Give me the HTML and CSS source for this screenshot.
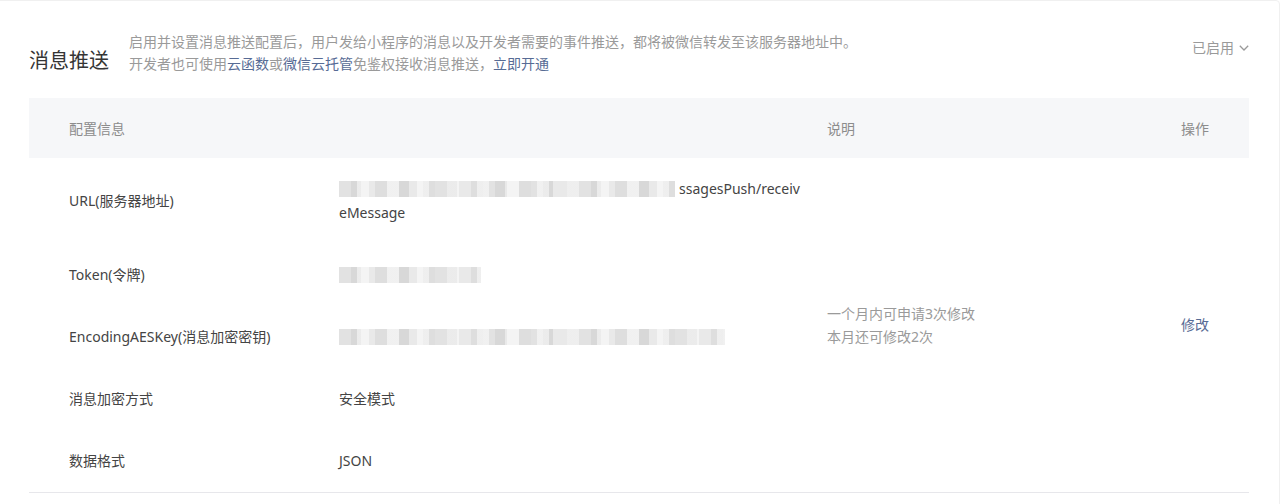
FILE: index.html
```html
<!DOCTYPE html>
<html lang="zh-CN">
<head>
  <meta charset="UTF-8" />
  <title>消息推送</title>
  <link rel="stylesheet" href="styles.css">
</head>
<body>

  <div class="card">
    <div class="card-head">
      <h2 class="card-title">消息推送</h2>
      <div class="card-desc">
        <p>启用并设置消息推送配置后，用户发给小程序的消息以及开发者需要的事件推送，都将被微信转发至该服务器地址中。</p>
        <p>开发者也可使用<a href="#">云函数</a>或<a href="#">微信云托管</a>免鉴权接收消息推送，<a href="#">立即开通</a></p>
      </div>
      <div class="status">
        已启用
        <svg width="10" height="6" viewBox="0 0 10 6"><polyline points="0.8,0.8 5,5 9.2,0.8" fill="none" stroke="#9a9a9a" stroke-width="1.3"/></svg>
      </div>
    </div>

    <table class="config">
      <colgroup>
        <col class="c-label">
        <col class="c-value">
        <col class="c-note">
        <col class="c-op">
      </colgroup>
      <thead>
        <tr>
          <th class="first">配置信息</th>
          <th></th>
          <th>说明</th>
          <th>操作</th>
        </tr>
      </thead>
      <tbody>
        <tr>
          <td class="first">URL(服务器地址)</td>
          <td class="value"><span class="masked w336" aria-hidden="true"></span>ssagesPush/receiv<br>eMessage</td>
          <td class="note" rowspan="5">一个月内可申请3次修改<br>本月还可修改2次</td>
          <td class="op" rowspan="5"><a href="#">修改</a></td>
        </tr>
        <tr>
          <td class="first">Token(令牌)</td>
          <td class="value"><span class="masked w142" aria-hidden="true"></span></td>
        </tr>
        <tr>
          <td class="first">EncodingAESKey(消息加密密钥)</td>
          <td class="value"><span class="masked w386" aria-hidden="true"></span></td>
        </tr>
        <tr>
          <td class="first">消息加密方式</td>
          <td class="value">安全模式</td>
        </tr>
        <tr>
          <td class="first">数据格式</td>
          <td class="value">JSON</td>
        </tr>
      </tbody>
    </table>
  </div>

</body>
</html>
```

FILE: styles.css
```css
body {
  margin: 0;
  font-family: "Noto Sans", "Noto Sans CJK SC", sans-serif;
  font-size: 14px;
  color: #444;
  background: #fff;
}
a {
  color: #576b95;
  text-decoration: none;
}
p {
  margin: 0;
}
.card {
  margin: 0 3px 0 -4px;
  border: 1px solid #f0f0f0;
  border-radius: 4px;
  padding: 30px 30px 0 32px;
  min-height: 520px;
}
.card-head {
  display: flex;
  align-items: flex-end;
}
.card-title {
  margin: 0 20px 0 0;
  font-size: 20px;
  font-weight: normal;
  line-height: 28px;
  color: #353535;
}
.card-desc {
  flex: 1;
  line-height: 22px;
  color: #9a9a9a;
}
.status {
  align-self: flex-start;
  margin-top: 6px;
  display: flex;
  align-items: center;
  gap: 5px;
  color: #9a9a9a;
  line-height: 22px;
}
.config {
  width: 100%;
  margin-top: 23px;
  border-collapse: collapse;
  table-layout: fixed;
}
.c-label { width: 310px; }
.c-value { width: 488px; }
.c-op { width: 68px; }
.config th {
  height: 60px;
  padding: 0;
  background: #f6f7f9;
  text-align: left;
  font-weight: normal;
  color: #8c8c8c;
}
.config td {
  padding: 19px 10px 19px 0;
  line-height: 24px;
  vertical-align: middle;
}
.config tbody tr:last-child td {
  border-bottom: 1px solid #e7e7eb;
}
.config .first {
  padding-left: 40px;
}
.config td.note {
  color: #9a9a9a;
  line-height: 23px;
  border-bottom: 1px solid #e7e7eb;
}
.config td.op {
  border-bottom: 1px solid #e7e7eb;
}
/* mosaic over secret values */
.masked {
  display: inline-block;
  vertical-align: top;
  margin: 4px 4px 0 0;
  height: 16px;
  background:
    repeating-linear-gradient(90deg, rgba(255,255,255,0) 0 18px, rgba(255,255,255,0.5) 18px 30px),
    repeating-linear-gradient(90deg, #e2e2e2 0 12px, #d8d8d8 12px 22px, #e9e9e9 22px 36px, #dedede 36px 48px);
  filter: blur(0.6px);
}
.w336 { width: 336px; }
.w142 { width: 142px; }
.w386 { width: 386px; }
```
